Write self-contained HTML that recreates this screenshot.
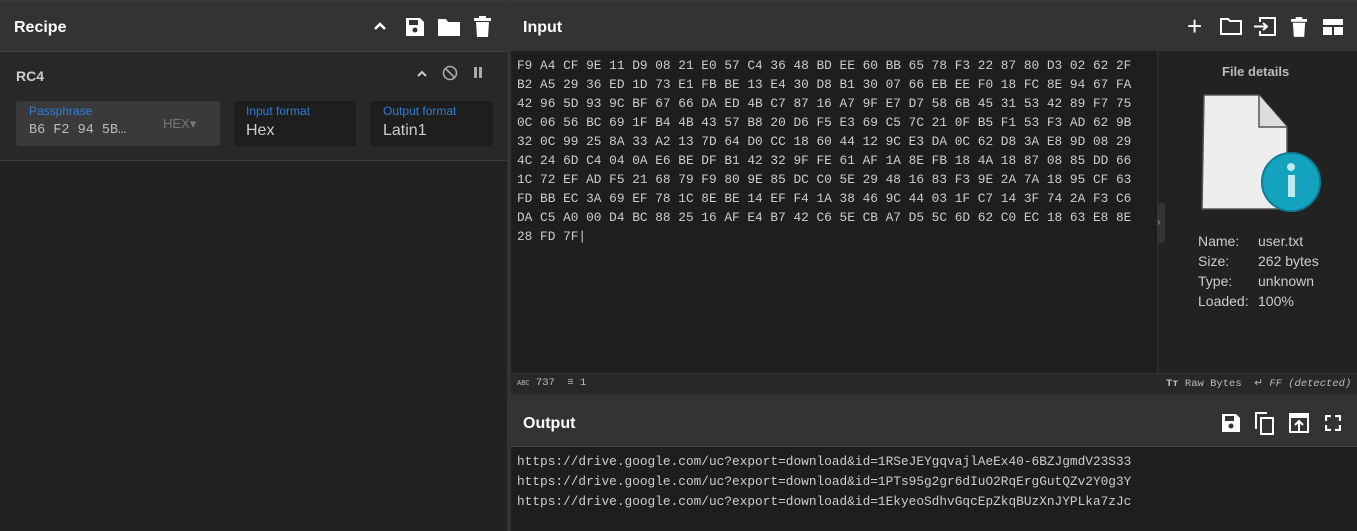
<!DOCTYPE html><html><head><style>
body{margin:0;width:1357px;height:531px;background:#222;font-family:"Liberation Sans",sans-serif;overflow:hidden;position:relative;color:#ddd}
.a{position:absolute}
.hdr{background:#333;border-bottom:1px solid #444;height:49px;border-top:2px solid #3a3a3a}
.ttl{font-weight:bold;font-size:16px;color:#fff;top:17px}
.mono{font-family:"Liberation Mono",monospace;color:#ccc;white-space:pre}
svg{position:absolute}
</style></head><body>
<div class="a" style="left:0;top:0;width:507px;height:531px;background:#222"></div>
<div class="a hdr" style="left:0;top:0;width:507px"></div>
<div class="a ttl" style="left:14px;top:19px">Recipe</div>
<svg style="left:373px;top:20px" width="14" height="12" viewBox="0 0 14 12"><path d="M2 9 L7 4 L12 9" stroke="#fff" stroke-width="2.5" fill="none"/></svg>
<svg style="left:405px;top:17px" width="20" height="20" viewBox="0 0 20 20"><path d="M1 1h14l4 4v14H1z" fill="#fff"/><rect x="4" y="3" width="9" height="5" fill="#333"/><circle cx="10" cy="13" r="2.5" fill="#333"/></svg>
<svg style="left:438px;top:18px" width="22" height="18" viewBox="0 0 22 18"><path d="M0 1h8l2 3h12v14H0z" fill="#fff"/></svg>
<svg style="left:474px;top:16px" width="17" height="21" viewBox="0 0 17 21"><rect x="0" y="2" width="17" height="3" fill="#fff"/><rect x="5" y="0" width="7" height="3" fill="#fff"/><path d="M2 6h13l-1 15H3z" fill="#fff"/></svg>
<div class="a" style="left:0;top:52px;width:507px;height:108px;background:#282828;border-bottom:1px solid #3c3c3c"></div>
<div class="a" style="left:16px;top:68px;font-weight:bold;font-size:14px;color:#ccc">RC4</div>
<svg style="left:416px;top:69px" width="12" height="9" viewBox="0 0 12 9"><path d="M2 7 L6 3 L10 7" stroke="#ccc" stroke-width="2" fill="none"/></svg>
<svg style="left:442px;top:65px" width="16" height="16" viewBox="0 0 16 16"><circle cx="8" cy="8" r="6.5" stroke="#aaa" stroke-width="1.6" fill="none"/><path d="M3.5 3.5L12.5 12.5" stroke="#aaa" stroke-width="1.6"/></svg>
<div class="a" style="left:474px;top:67px;width:3px;height:11px;background:#aaa"></div><div class="a" style="left:479px;top:67px;width:3px;height:11px;background:#aaa"></div>
<div class="a" style="left:16px;top:101px;width:204px;height:45px;background:#3a3a3a;border-radius:3px"></div>
<div class="a" style="left:29px;top:104px;font-size:12px;color:#2f7ed8">Passphrase</div>
<div class="a mono" style="left:29px;top:123px;font-size:13.5px;color:#bbb">B6 F2 94 5B…</div>
<div class="a" style="left:163px;top:116px;font-size:13px;color:#777">HEX▾</div>
<div class="a" style="left:234px;top:101px;width:122px;height:45px;background:#1e1e1e;border-radius:3px"></div>
<div class="a" style="left:246px;top:104px;font-size:12px;color:#2f7ed8">Input format</div>
<div class="a" style="left:246px;top:122px;font-size:16px;color:#ccc">Hex</div>
<div class="a" style="left:370px;top:101px;width:123px;height:45px;background:#1e1e1e;border-radius:3px"></div>
<div class="a" style="left:383px;top:104px;font-size:12px;color:#2f7ed8">Output format</div>
<div class="a" style="left:383px;top:122px;font-size:16px;color:#ccc">Latin1</div>
<div class="a" style="left:507px;top:0;width:4px;height:531px;background:#333"></div>

<div class="a hdr" style="left:511px;top:0;width:846px"></div>
<div class="a ttl" style="left:523px;top:19px">Input</div>
<div class="a" style="left:1187px;top:11px;font-size:26px;color:#fff;font-weight:300">+</div>
<svg style="left:1220px;top:17px" width="22" height="18" viewBox="0 0 22 18"><path d="M1 2h7l2 2h11v13H1z" stroke="#fff" stroke-width="2" fill="none"/></svg>
<svg style="left:1254px;top:17px" width="23" height="19" viewBox="0 0 23 19"><path d="M6 5V1h15v17H6v-4" stroke="#fff" stroke-width="2" fill="none"/><path d="M0 9.5h12M9 6l4 3.5-4 3.5" stroke="#fff" stroke-width="2" fill="none"/></svg>
<svg style="left:1291px;top:17px" width="16" height="20" viewBox="0 0 17 21"><rect x="0" y="2" width="17" height="3" fill="#fff"/><rect x="5" y="0" width="7" height="3" fill="#fff"/><path d="M2 6h13l-1 15H3z" fill="#fff"/></svg>
<svg style="left:1323px;top:19px" width="20" height="16" viewBox="0 0 20 16"><rect x="0" y="0" width="20" height="6" fill="#fff"/><rect x="0" y="8" width="9" height="8" fill="#fff"/><rect x="11" y="8" width="9" height="8" fill="#fff"/></svg>
<div class="a" style="left:511px;top:51px;width:646px;height:322px;background:#1e1e1e"></div>
<div class="a mono" style="left:517px;top:56px;font-size:12.8px;line-height:19px">F9 A4 CF 9E 11 D9 08 21 E0 57 C4 36 48 BD EE 60 BB 65 78 F3 22 87 80 D3 02 62 2F
B2 A5 29 36 ED 1D 73 E1 FB BE 13 E4 30 D8 B1 30 07 66 EB EE F0 18 FC 8E 94 67 FA
42 96 5D 93 9C BF 67 66 DA ED 4B C7 87 16 A7 9F E7 D7 58 6B 45 31 53 42 89 F7 75
0C 06 56 BC 69 1F B4 4B 43 57 B8 20 D6 F5 E3 69 C5 7C 21 0F B5 F1 53 F3 AD 62 9B
32 0C 99 25 8A 33 A2 13 7D 64 D0 CC 18 60 44 12 9C E3 DA 0C 62 D8 3A E8 9D 08 29
4C 24 6D C4 04 0A E6 BE DF B1 42 32 9F FE 61 AF 1A 8E FB 18 4A 18 87 08 85 DD 66
1C 72 EF AD F5 21 68 79 F9 80 9E 85 DC C0 5E 29 48 16 83 F3 9E 2A 7A 18 95 CF 63
FD BB EC 3A 69 EF 78 1C 8E BE 14 EF F4 1A 38 46 9C 44 03 1F C7 14 3F 74 2A F3 C6
DA C5 A0 00 D4 BC 88 25 16 AF E4 B7 42 C6 5E CB A7 D5 5C 6D 62 C0 EC 18 63 E8 8E
28 FD 7F|</div>
<div class="a" style="left:1157px;top:51px;width:200px;height:322px;background:#222;border-left:1px solid #333"></div>
<div class="a" style="left:1157px;top:203px;width:8px;height:40px;background:#333;border-radius:0 3px 3px 0;color:#aaa;font-size:10px;line-height:40px">›</div>
<div class="a" style="left:1222px;top:64px;font-weight:bold;font-size:13px;color:#bbb">File details</div>
<svg style="left:1196px;top:90px" width="126" height="124" viewBox="0 0 126 124"><path d="M8 5h55l28 32v82H6z" fill="#eee" stroke="#555" stroke-width="1.5"/><path d="M63 5v32h28" fill="#ddd" stroke="#555" stroke-width="1.5"/><circle cx="95" cy="92" r="29" fill="#13a3bf"/><circle cx="95" cy="92" r="29" fill="none" stroke="#0b7e95" stroke-width="2"/><rect x="92" y="85" width="7" height="22" fill="#bfe9f1"/><circle cx="95" cy="77" r="4" fill="#bfe9f1"/></svg>
<div class="a" style="left:1198px;top:231px;font-size:14px;line-height:20px;color:#ccc">Name:<br>Size:<br>Type:<br>Loaded:</div>
<div class="a" style="left:1258px;top:231px;font-size:14px;line-height:20px;color:#ccc">user.txt<br>262 bytes<br>unknown<br>100%</div>
<div class="a" style="left:511px;top:373px;width:846px;height:20px;background:#282828;border-top:1px solid #333"></div>
<div class="a mono" style="left:517px;top:377px;font-size:10.5px;color:#bbb"><span style="font-size:7px">ABC</span> 737  <b>≡</b> 1</div>
<div class="a mono" style="left:1166px;top:377px;font-size:10.5px;color:#bbb"><b>Tт</b> Raw Bytes  ↵ <i>FF (detected)</i></div>
<div class="a" style="left:511px;top:393px;width:846px;height:3px;background:#303030"></div>
<div class="a" style="left:918px;top:396px;width:32px;height:1px;border-top:2px dotted #ccc"></div>
<div class="a hdr" style="left:511px;top:396px;width:846px;height:50px;border-top:none"></div>
<div class="a ttl" style="left:523px;top:415px">Output</div>
<svg style="left:1221px;top:413px" width="20" height="20" viewBox="0 0 20 20"><path d="M1 1h14l4 4v14H1z" fill="#fff"/><rect x="4" y="3" width="9" height="5" fill="#333"/><circle cx="10" cy="13" r="2.5" fill="#333"/></svg>
<svg style="left:1254px;top:412px" width="22" height="23" viewBox="0 0 22 23"><path d="M2 17V1h11" stroke="#fff" stroke-width="2" fill="none"/><rect x="7" y="6" width="12" height="16" stroke="#fff" stroke-width="2" fill="none"/></svg>
<svg style="left:1289px;top:413px" width="20" height="20" viewBox="0 0 20 20"><rect x="1" y="1" width="18" height="18" stroke="#fff" stroke-width="2" fill="none"/><rect x="1" y="1" width="18" height="4" fill="#fff"/><path d="M10 18V9M6 12l4-4 4 4" stroke="#fff" stroke-width="2" fill="none"/></svg>
<svg style="left:1325px;top:415px" width="16" height="16" viewBox="0 0 16 16"><path d="M1 6V1h5M10 1h5v5M15 10v5h-5M6 15H1v-5" stroke="#fff" stroke-width="2.2" fill="none"/></svg>
<div class="a" style="left:511px;top:447px;width:846px;height:84px;background:#1e1e1e"></div>
<div class="a mono" style="left:517px;top:452px;font-size:12.8px;line-height:20px">https://drive.google.com/uc?export=download&amp;id=1RSeJEYgqvajlAeEx40-6BZJgmdV23S33
https://drive.google.com/uc?export=download&amp;id=1PTs95g2gr6dIuO2RqErgGutQZv2Y0g3Y
https://drive.google.com/uc?export=download&amp;id=1EkyeoSdhvGqcEpZkqBUzXnJYPLka7zJc</div>
</body></html>
